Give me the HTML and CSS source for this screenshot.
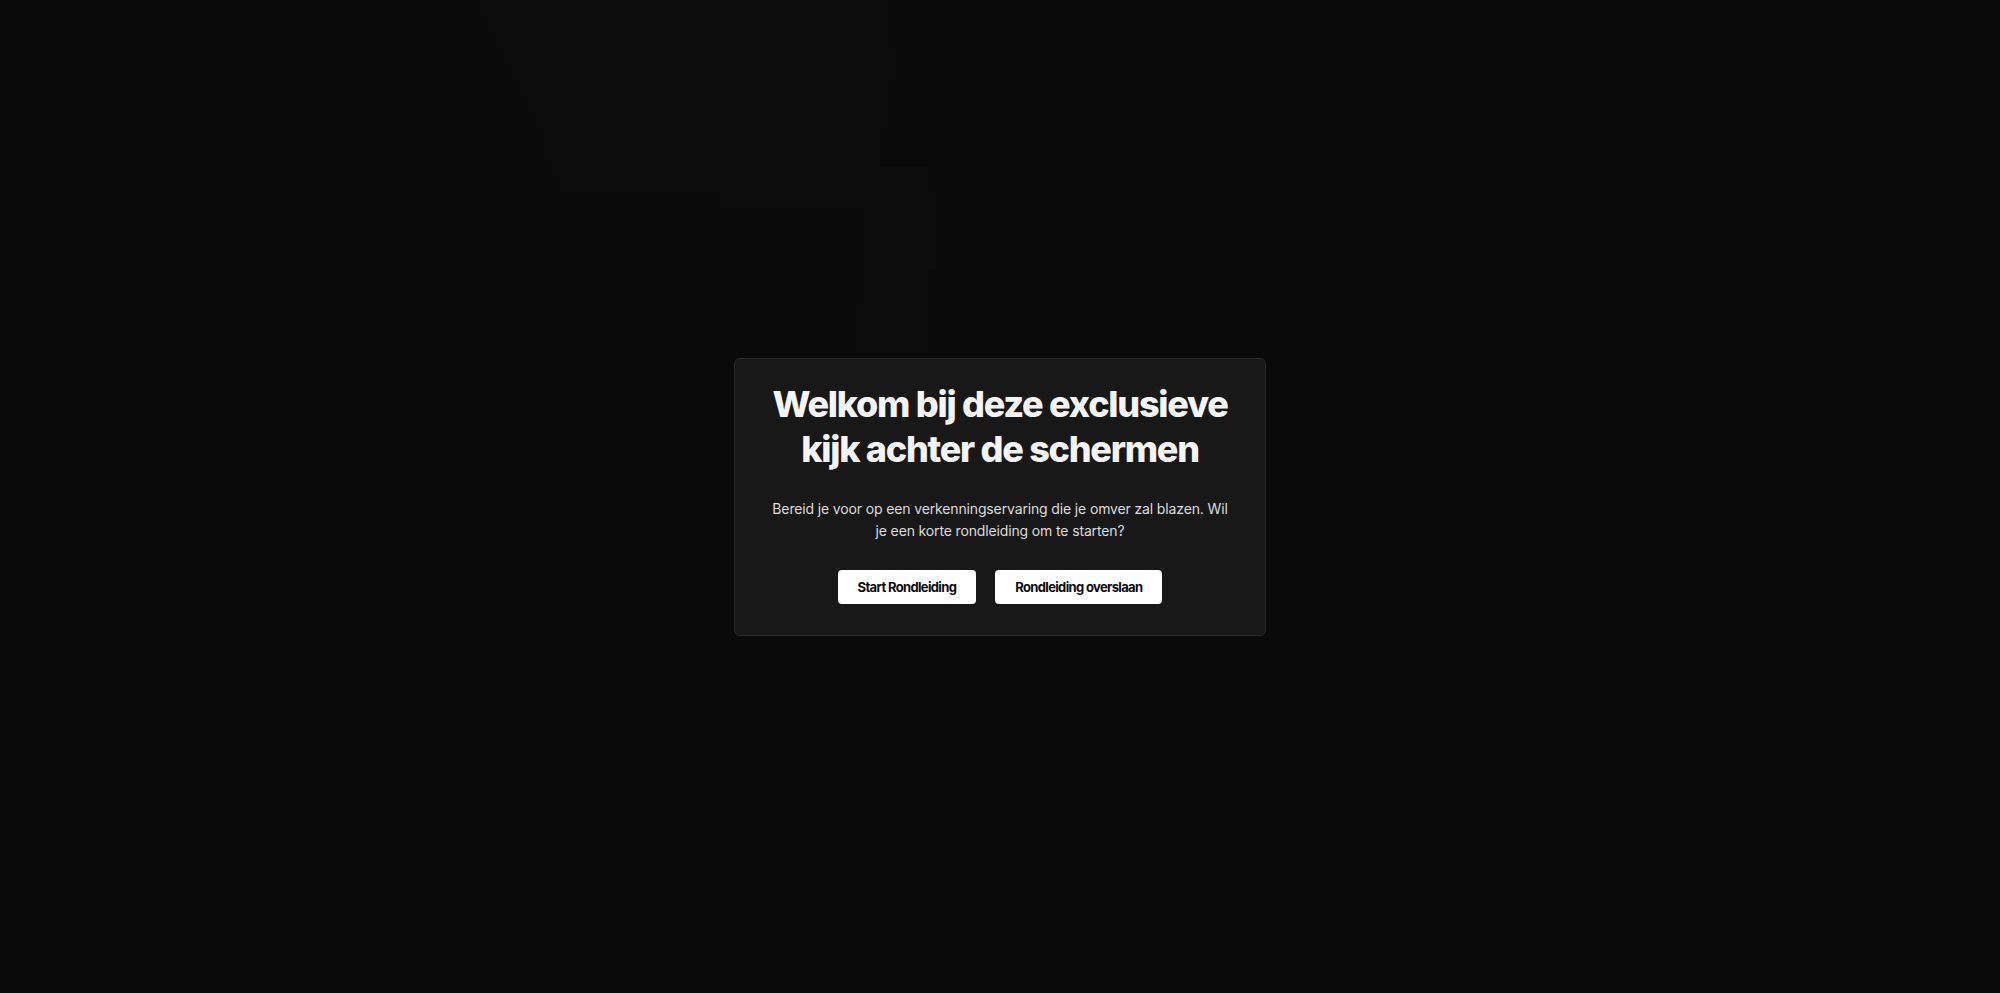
FILE: index.html
```html
<!DOCTYPE html>
<html lang="nl">
<head>
<meta charset="utf-8">
<title>Welkom</title>
<link rel="stylesheet" href="styles.css">
</head>
<body>
<svg class="backdrop" width="2000" height="993" viewBox="0 0 2000 993" aria-hidden="true">
  <polygon class="shade" points="480,0 888,0 888,48 896,48 896,80 888,80 888,128 880,128 880,167 928,167 928,192 936,192 936,270 928,270 928,352 856,352 856,304 864,304 864,208 720,208 720,192 560,192 560,176 552,176 552,160 544,160 544,128 536,128 536,112 528,112 528,96 520,96 520,80 512,80 512,64 504,64 504,48 496,48 496,32 488,32 488,16 480,16"/>
</svg>
<main class="stage">
  <section class="dialog">
    <h1 class="dialog-title">Welkom bij deze exclusieve kijk achter de schermen</h1>
    <p class="dialog-text">Bereid je voor op een verkenningservaring die je omver zal blazen. Wil je een korte rondleiding om te starten?</p>
    <div class="dialog-actions">
      <button class="btn">Start Rondleiding</button>
      <button class="btn">Rondleiding overslaan</button>
    </div>
  </section>
</main>
</body>
</html>
```
FILE: styles.css
```css
* { box-sizing: border-box; }
html, body {
  margin: 0;
  height: 100%;
  background: #0a0a0a;
  font-family: Inter, "Noto Sans", sans-serif;
  overflow: hidden;
}
.backdrop {
  position: absolute;
  left: 0;
  top: 0;
}
.shade { fill: #0d0d0d; }
.stage {
  position: relative;
  height: 100%;
  display: flex;
  align-items: center;
  justify-content: center;
}
.dialog {
  width: 532px;
  background: #181818;
  border: 1px solid #2a2a2a;
  border-radius: 6px;
  padding: 23px 32px 31px;
  text-align: center;
}
.dialog-title {
  margin: 0;
  color: #f4f4f4;
  font-size: 36px;
  line-height: 45px;
  font-weight: 800;
  letter-spacing: -0.035em;
}
.dialog-text {
  margin: 26px 0 0;
  color: #dcdcdc;
  font-size: 14px;
  line-height: 22.5px;
  letter-spacing: -0.01em;
}
.dialog-actions {
  margin-top: 27px;
  display: flex;
  justify-content: center;
  gap: 19px;
}
.btn {
  background: #ffffff;
  color: #0a0a0a;
  border: 0;
  border-radius: 4px;
  padding: 7px 20px;
  font-family: inherit;
  font-size: 13px;
  line-height: 20px;
  font-weight: 700;
  letter-spacing: -0.05em;
}
```
